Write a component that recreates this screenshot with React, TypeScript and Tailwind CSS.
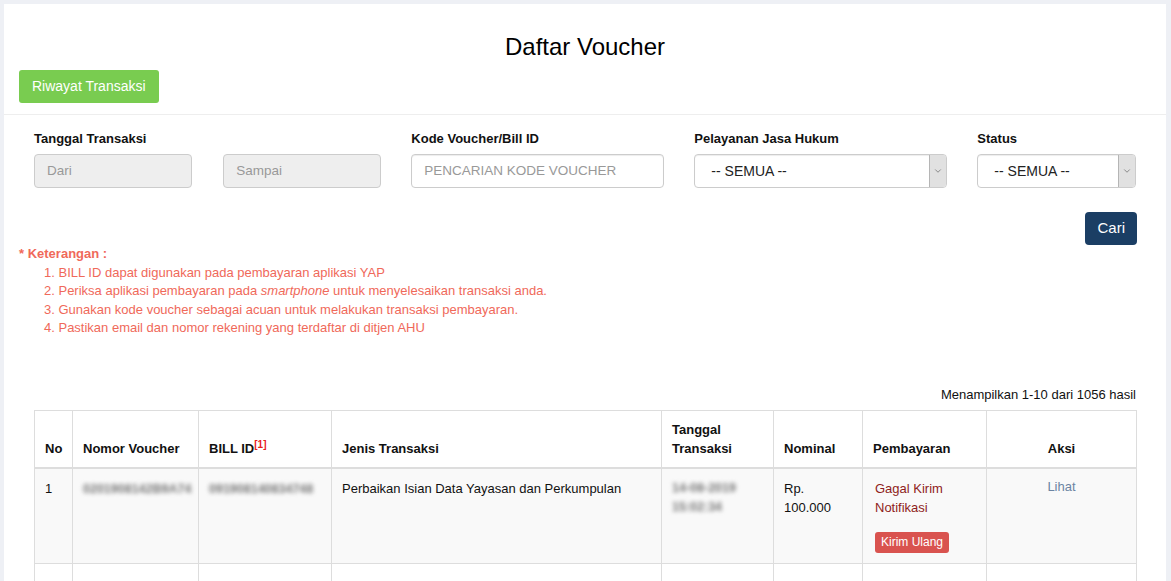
import React from 'react';
import { ChevronDown } from 'lucide-react';

const notes = [
  <>BILL ID dapat digunakan pada pembayaran aplikasi YAP</>,
  <>Periksa aplikasi pembayaran pada <i>smartphone</i> untuk menyelesaikan transaksi anda.</>,
  <>Gunakan kode voucher sebagai acuan untuk melakukan transaksi pembayaran.</>,
  <>Pastikan email dan nomor rekening yang terdaftar di ditjen AHU</>,
];

const SelectBox: React.FC = () => (
  <div className="relative h-[34px] rounded-[4px] border border-[#ccc] bg-white shadow-[inset_0_1px_1px_rgba(0,0,0,0.075)]">
    <div className="pl-[16px] text-[14px] leading-[32px] text-[#222]">-- SEMUA --</div>
    <span className="absolute right-0 top-0 bottom-0 flex w-[17px] items-center justify-center rounded-r-[3px] border-l border-[#b5b5b5] bg-[#e1e1e1]">
      <ChevronDown size={10} strokeWidth={1.5} color="#555" />
    </span>
  </div>
);

const th = 'border border-[#ddd] border-b-2 px-[10px] py-[9px] text-left align-bottom font-bold';
const td = 'border border-[#ddd] px-[10px] pt-[10px] pb-[10px] align-top';
const blurred = 'text-[12.5px] font-bold text-[#777] blur-[2.2px]';

const App: React.FC = () => {
  return (
    <div className="min-h-screen bg-[#eef0f5] pl-1 pr-[5px] pt-1 font-['Liberation_Sans',Arial,sans-serif] text-[13px] text-[#111]">
      <div className="min-h-[600px] bg-white px-[15px]">
        <h1 className="pt-[30px] text-center text-[24px] leading-[26px] text-black">Daftar Voucher</h1>

        <button className="mt-[10px] rounded-[3px] bg-[#79cc50] px-[13px] py-[7px] text-[14px] leading-[19px] text-white">
          Riwayat Transaksi
        </button>

        <div className="-mx-[15px] mt-[11px] border-t border-[#eee]" />

        <div className="mt-[14px] grid grid-cols-12">
          <div className="col-span-4 px-[15px]">
            <div className="mb-[5px] font-bold leading-[20px]">Tanggal Transaksi</div>
            <div className="grid grid-cols-2 gap-[31px]">
              <div className="h-[34px] rounded-[4px] border border-[#ccc] bg-[#eee] pl-[12px] text-[13.5px] leading-[32px] text-[#999]">Dari</div>
              <div className="h-[34px] rounded-[4px] border border-[#ccc] bg-[#eee] pl-[12px] text-[13.5px] leading-[32px] text-[#999]">Sampai</div>
            </div>
          </div>
          <div className="col-span-3 px-[15px]">
            <div className="mb-[5px] font-bold leading-[20px]">Kode Voucher/Bill ID</div>
            <div className="h-[34px] rounded-[4px] border border-[#ccc] bg-white pl-[12px] text-[13.5px] leading-[32px] text-[#999] shadow-[inset_0_1px_1px_rgba(0,0,0,0.075)]">
              PENCARIAN KODE VOUCHER
            </div>
          </div>
          <div className="col-span-3 px-[15px]">
            <div className="mb-[5px] font-bold leading-[20px]">Pelayanan Jasa Hukum</div>
            <SelectBox />
          </div>
          <div className="col-span-2 px-[15px]">
            <div className="mb-[5px] font-bold leading-[20px]">Status</div>
            <SelectBox />
          </div>
        </div>

        <div className="mt-[24px] flex justify-end pr-[14px]">
          <button className="h-[33px] rounded-[4px] bg-[#1b3e64] px-[12px] text-[15px] text-white">Cari</button>
        </div>

        <div className="text-[13px] leading-[18.5px] text-[#f0695a]">
          <div className="font-bold">* Keterangan :</div>
          <ol className="pl-[25px]">
            {notes.map((n, i) => (
              <li key={i}>
                {i + 1}. {n}
              </li>
            ))}
          </ol>
        </div>

        <div className="px-[15px]">
          <div className="mt-[47px] mb-[6px] text-right leading-[19px] text-[#111]">Menampilkan 1-10 dari 1056 hasil</div>
          <table className="w-full table-fixed border-collapse leading-[19px]">
            <colgroup>
              <col className="w-[38px]" />
              <col className="w-[126px]" />
              <col className="w-[133px]" />
              <col className="w-[330px]" />
              <col className="w-[112px]" />
              <col className="w-[89px]" />
              <col className="w-[124px]" />
              <col className="w-[150px]" />
            </colgroup>
            <thead>
              <tr>
                <th className={th}>No</th>
                <th className={th}>Nomor Voucher</th>
                <th className={th}>
                  BILL ID<sup className="text-[10px] font-bold text-[#e8201c]">[1]</sup>
                </th>
                <th className={th}>Jenis Transaksi</th>
                <th className={th}>
                  Tanggal
                  <br />
                  Transaksi
                </th>
                <th className={th}>Nominal</th>
                <th className={th}>Pembayaran</th>
                <th className={`${th} !text-center`}>Aksi</th>
              </tr>
            </thead>
            <tbody>
              <tr className="bg-[#f9f9f9]">
                <td className={td}>1</td>
                <td className={td}>
                  <span className={blurred}>0201908142B9A74</span>
                </td>
                <td className={td}>
                  <span className={blurred}>091908140834748</span>
                </td>
                <td className={td}>Perbaikan Isian Data Yayasan dan Perkumpulan</td>
                <td className={td}>
                  <div className={blurred}>
                    14-08-2019
                    <br />
                    15:02:34
                  </div>
                </td>
                <td className={td}>
                  Rp.
                  <br />
                  100.000
                </td>
                <td className={td}>
                  <div className="pl-[2px] text-[#8f1d21]">
                    Gagal Kirim
                    <br />
                    Notifikasi
                  </div>
                  <button className="mt-[15px] ml-[2px] h-[21px] rounded-[3px] bg-[#d9534f] px-[6px] text-[12px] leading-[21px] text-white">
                    Kirim Ulang
                  </button>
                </td>
                <td className={`${td} text-center`}>
                  <span className="relative -top-[2px] text-[#6c84a3]">Lihat</span>
                </td>
              </tr>
              <tr>
                {Array.from({ length: 8 }).map((_, i) => (
                  <td key={i} className="h-[40px] border border-[#ddd]" />
                ))}
              </tr>
            </tbody>
          </table>
        </div>
      </div>
    </div>
  );
};

export default App;
